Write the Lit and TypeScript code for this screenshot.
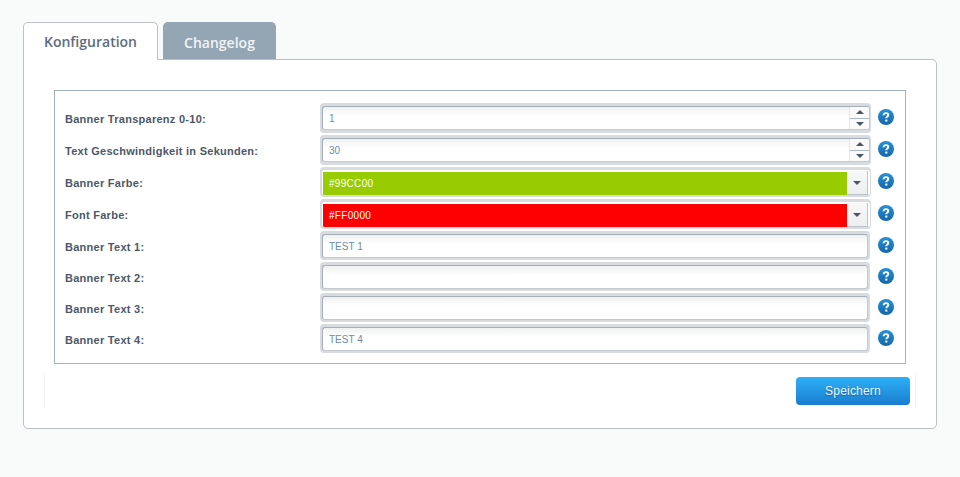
import { LitElement, html, css } from "lit";
import { customElement } from "lit/decorators.js";

type Row = { label: string; kind: "num" | "color" | "text"; value: string; bg?: string; h: number };
const rows: Row[] = [
  { label: "Banner Transparenz 0-10:", kind: "num", value: "1", h: 32 },
  { label: "Text Geschwindigkeit in Sekunden:", kind: "num", value: "30", h: 32 },
  { label: "Banner Farbe:", kind: "color", value: "#99CC00", bg: "#99cc00", h: 32 },
  { label: "Font Farbe:", kind: "color", value: "#FF0000", bg: "#ff0000", h: 32 },
  { label: "Banner Text 1:", kind: "text", value: "TEST 1", h: 31 },
  { label: "Banner Text 2:", kind: "text", value: "", h: 31 },
  { label: "Banner Text 3:", kind: "text", value: "", h: 31 },
  { label: "Banner Text 4:", kind: "text", value: "TEST 4", h: 31 },
];

@customElement("app-root")
export class AppRoot extends LitElement {
  static styles = css`
    :host { display: block; height: 477px; background: #f9fafa; font-family: "Liberation Sans", Arial, sans-serif; overflow: hidden; }
    .wrap { padding: 22px 23px 0; width: 914px; }
    .tabs { display: flex; gap: 5px; height: 38px; position: relative; z-index: 1; }
    .tab { box-sizing: border-box; height: 38px; border: 1px solid #bcc1c4; border-bottom: none; border-radius: 5px 5px 0 0; font: 600 14px "Open Sans", sans-serif; display: flex; align-items: center; justify-content: center; }
    .tab.on { width: 135px; background: #fff; color: #5d6c7f; }
    .tab.off { width: 113px; height: 37px; background: #94a6b4; color: #f1f4f6; border-color: #94a6b4; padding-top: 2px; }
    .panel { box-sizing: border-box; margin-top: -1px; height: 370px; background: #fff; border: 1px solid #bcc1c4; border-radius: 0 5px 5px 5px; padding: 30px 30px 0; }
    .fs { box-sizing: border-box; width: 852px; height: 274px; border: 1px solid #a2b2bf; padding: 12px 0 0 10px; }
    .row { display: flex; align-items: flex-start; }
    .label { width: 255px; flex: none; font-size: 11px; font-weight: bold; letter-spacing: .27px; color: #4c586a; line-height: 32px; }
    .outer { box-sizing: border-box; height: 30px; background: #d8dce1; border-radius: 4px; padding: 3px 1px 3px 2px; display: flex; flex: none; }
    .outer.wide { width: 551px; }
    .outer.narrow { width: 550px; height: 29px; padding: 3px 2px 2px; }
    .inner { box-sizing: border-box; flex: 1; min-width: 0; height: 24px; border: 1px solid; border-color: #a5afba #c3c9cf #c3c9cf #a5afba; border-radius: 3px; background: linear-gradient(#eff1f1, #fff 9px); display: flex; overflow: hidden; }
    .val { flex: 1; font-size: 10px; line-height: 23px; padding-left: 6px; color: #6a8cab; }
    .num .val { line-height: 24px; }
    .spin { width: 19px; flex: none; border-left: 1px solid #e4e6e8; display: flex; flex-direction: column; background: #fafafa; }
    .spin span { flex: 1; display: flex; align-items: center; justify-content: center; }
    .spin span + span { border-top: 1px solid #aeb6be; }
    .up { width: 0; height: 0; border: 4.5px solid transparent; border-top: 0; border-bottom: 4px solid #4a5762; }
    .down { width: 0; height: 0; border: 4.5px solid transparent; border-bottom: 0; border-top: 4px solid #4a5762; }
    .color { border: none; background: #fff; padding-top: 1px; height: 25px; }
    .swatch { flex: 1; font-size: 10px; letter-spacing: .3px; line-height: 24px; padding-left: 6px; color: #fff; height: 23px; margin: 1px 0 0 1px; }
    .drop { width: 21px; flex: none; margin-right: 2px; background: linear-gradient(#f7f8f8, #eceef0); border-right: 1px solid #bcc3ca; border-bottom: 1px solid #bcc3ca; box-sizing: border-box; height: 24px; display: flex; align-items: center; justify-content: center; }
    .help { width: 16px; height: 16px; flex: none; margin: 6px 0 0 7px; }
    .narrow + .help { margin-left: 8px; }
    .foot { box-sizing: border-box; width: 872px; height: 35px; margin: 9px 0 0 -10px; border-left: 1px solid #f3f4f4; border-right: 1px solid #f3f4f4; padding: 4px 5px 0 0; display: flex; justify-content: flex-end; }
    .btn { box-sizing: border-box; width: 114px; height: 28px; border-radius: 4px; border: none; background: linear-gradient(#2db0f7, #1a7dce); color: #f2f8fd; font: 12px "Liberation Sans", Arial, sans-serif; text-shadow: 0 1px 1px #16609f; letter-spacing: .2px; padding: 0; }
  `;

  private help() {
    return html`<svg class="help" viewBox="0 0 16 16">
      <defs><linearGradient id="hg" x1="0" y1="0" x2="0" y2="1"><stop offset="0" stop-color="#2590dc"/><stop offset="1" stop-color="#1566a8"/></linearGradient></defs>
      <circle cx="8" cy="8" r="8" fill="url(#hg)"/>
      <path d="M5.6 6.2c.1-1.4 1-2.1 2.4-2.1s2.3.8 2.3 1.9c0 .9-.5 1.4-1.2 1.8-.6.4-.8.7-.8 1.5" fill="none" stroke="#fff" stroke-width="1.9"/>
      <rect x="7.3" y="10.6" width="2" height="2" fill="#fff"/>
    </svg>`;
  }

  private field(r: Row) {
    if (r.kind === "num")
      return html`<div class="outer wide num"><div class="inner"><div class="val">${r.value}</div>
        <div class="spin"><span><i class="up"></i></span><span><i class="down"></i></span></div></div></div>`;
    if (r.kind === "color")
      return html`<div class="outer wide"><div class="inner color">
        <div class="swatch" style="background:${r.bg}">${r.value}</div>
        <div class="drop"><i class="down"></i></div></div></div>`;
    return html`<div class="outer narrow"><div class="inner"><div class="val">${r.value}</div></div></div>`;
  }

  render() {
    return html`<div class="wrap">
      <div class="tabs"><div class="tab on">Konfiguration</div><div class="tab off">Changelog</div></div>
      <div class="panel">
        <div class="fs">
          ${rows.map(r => html`<div class="row" style="height:${r.h}px">
            <div class="label">${r.label}</div>${this.field(r)}${this.help()}</div>`)}
        </div>
        <div class="foot"><button class="btn">Speichern</button></div>
      </div>
    </div>`;
  }
}
